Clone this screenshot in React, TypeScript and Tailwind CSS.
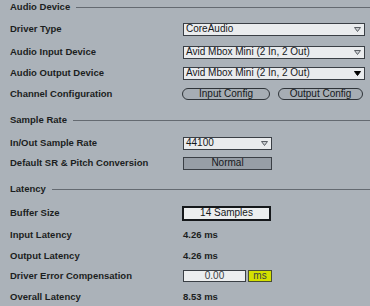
import React from "react";

const Label = ({ children }: { children: React.ReactNode }) => (
  <div className="w-[172px] shrink-0 font-bold text-[9.5px] leading-none text-[#1b1e21]">{children}</div>
);

const Header = ({ title, mt }: { title: string; mt: string }) => (
  <div className={`flex items-center h-[14px] ${mt}`}>
    <span className="font-bold text-[9.5px] leading-none text-[#1b1e21]">{title}</span>
    <div className="ml-[6px] flex-1 h-px bg-[#646a71]" />
  </div>
);

const Tri = ({ solid }: { solid?: boolean }) => (
  <svg width="7" height="5" viewBox="0 0 7 5" className="shrink-0">
    <polygon
      points="0.5,0.5 6.5,0.5 3.5,4.5"
      fill={solid ? "#000" : "#c9ccd0"}
      stroke={solid ? "#000" : "#5a5f65"}
      strokeWidth="1"
    />
  </svg>
);

const Dropdown = ({ text, w, solid }: { text: string; w: string; solid?: boolean }) => (
  <div
    className={`ml-[1px] ${w} h-[13px] flex items-center justify-between border border-[#3a3f45] bg-[#eaecee] pl-[2px] pr-[3px] text-[10px] leading-none text-[#15181b]`}
  >
    <span>{text}</span>
    <Tri solid={solid} />
  </div>
);

export default function App() {
  return (
    <div className="w-[370px] h-[306px] bg-[#abb2b9] pl-[10px] font-['Liberation_Sans',Arial,sans-serif] overflow-hidden">
      <div className="flex flex-col">
        <Header title="Audio Device" mt="mt-0" />
        <div className="flex items-center h-[14px] mt-[8px]">
          <Label>Driver Type</Label>
          <Dropdown text="CoreAudio" w="w-[182px]" />
        </div>
        <div className="flex items-center h-[14px] mt-[9px]">
          <Label>Audio Input Device</Label>
          <Dropdown text="Avid Mbox Mini (2 In, 2 Out)" w="w-[182px]" />
        </div>
        <div className="flex items-center h-[14px] mt-[7px]">
          <Label>Audio Output Device</Label>
          <Dropdown text="Avid Mbox Mini (2 In, 2 Out)" w="w-[182px]" solid />
        </div>
        <div className="flex items-center h-[14px] mt-[7px]">
          <Label>Channel Configuration</Label>
          <div className="flex gap-[8px]">
            <div className="w-[88px] h-[12px] rounded-full border border-[#2f3439] bg-[#a6adb4] flex items-center justify-center text-[10px] leading-none text-[#15181b]">
              Input Config
            </div>
            <div className="w-[85px] h-[12px] rounded-full border border-[#2f3439] bg-[#a6adb4] flex items-center justify-center text-[10px] leading-none text-[#15181b]">
              Output Config
            </div>
          </div>
        </div>
        <Header title="Sample Rate" mt="mt-[12px]" />
        <div className="flex items-center h-[14px] mt-[9px]">
          <Label>In/Out Sample Rate</Label>
          <Dropdown text="44100" w="w-[89px]" />
        </div>
        <div className="flex items-center h-[14px] mt-[6px]">
          <Label>Default SR &amp; Pitch Conversion</Label>
          <div className="ml-[1px] w-[89px] h-[13px] border border-[#3a3f45] bg-[#979ea6] flex items-center justify-center text-[10px] leading-none text-[#15181b]">
            Normal
          </div>
        </div>
        <Header title="Latency" mt="mt-[12px]" />
        <div className="flex items-center h-[14px] mt-[10px]">
          <Label>Buffer Size</Label>
          <div className="w-[89px] h-[15px] border-2 border-[#15181b] bg-[#eceeef] flex items-center justify-center text-[10px] leading-none text-[#15181b]">
            14 Samples
          </div>
        </div>
        <div className="flex items-center h-[14px] mt-[8px]">
          <Label>Input Latency</Label>
          <div className="ml-[1px] font-bold text-[9.5px] leading-none text-[#1b1e21]">4.26 ms</div>
        </div>
        <div className="flex items-center h-[14px] mt-[7px]">
          <Label>Output Latency</Label>
          <div className="ml-[1px] font-bold text-[9.5px] leading-none text-[#1b1e21]">4.26 ms</div>
        </div>
        <div className="flex items-center h-[14px] mt-[6px]">
          <Label>Driver Error Compensation</Label>
          <div className="ml-[1px] flex gap-[2px]">
            <div className="w-[63px] h-[12px] border border-[#3a3f45] bg-[#eceeef] flex items-center justify-center text-[10px] leading-none text-[#3a3f45]">
              0.00
            </div>
            <div className="w-[24px] h-[12px] border border-[#4a4f30] bg-[#d3e000] flex items-center justify-center text-[10px] leading-none text-[#3a3f45]">
              ms
            </div>
          </div>
        </div>
        <div className="flex items-center h-[14px] mt-[7px]">
          <Label>Overall Latency</Label>
          <div className="ml-[1px] font-bold text-[9.5px] leading-none text-[#1b1e21]">8.53 ms</div>
        </div>
      </div>
    </div>
  );
}
